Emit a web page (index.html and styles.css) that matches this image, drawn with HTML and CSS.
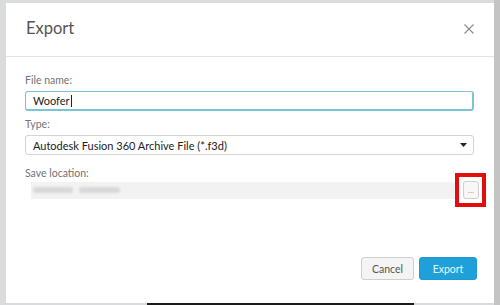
FILE: index.html
```html
<!DOCTYPE html>
<html lang="en">
<head>
    <meta charset="UTF-8">
    <meta name="viewport" content="width=device-width, initial-scale=1.0">
    <title>Export</title>
    <link rel="stylesheet" href="styles.css">
</head>
<body>
    <div class="backdrop">
        <div class="dialog">
            <div class="dialog-header">
                <h1>Export</h1>
                <button class="btn-close" aria-label="Close">
                    <svg width="10" height="10" viewBox="0 0 10 10">
                        <path d="M0.5 0.5 L9.5 9.5 M9.5 0.5 L0.5 9.5" stroke="#8a8a8a" stroke-width="1.1" fill="none"/>
                    </svg>
                </button>
            </div>

            <div class="dialog-body">
                <div class="form-group">
                    <label>File name:</label>
                    <div class="input focused">
                        <span>Woofer</span><span class="caret"></span>
                    </div>
                </div>
                <div class="form-group">
                    <label>Type:</label>
                    <div class="input select">
                        <span>Autodesk Fusion 360 Archive File (*.f3d)</span>
                        <svg width="7" height="4" viewBox="0 0 7 4"><path d="M0 0 H7 L3.5 4 Z" fill="#222"/></svg>
                    </div>
                </div>
                <div class="form-group location-group">
                    <label>Save location:</label>
                    <div class="location-row">
                        <div class="location">
                            <span class="blur blur-a"></span>
                            <span class="blur blur-b"></span>
                        </div>
                        <div class="browse-mark">
                            <button class="btn-browse">...</button>
                        </div>
                    </div>
                </div>
            </div>

            <div class="dialog-footer">
                <button class="btn btn-cancel">Cancel</button>
                <button class="btn btn-export">Export</button>
            </div>
        </div>
        <div class="taskbar">
            <span class="bar-dark"></span>
        </div>
    </div>
</body>
</html>
```

FILE: styles.css
```css
body {
    margin: 0;
    padding: 0;
    width: 500px;
    height: 305px;
    overflow: hidden;
    background: #d6d8da;
    font-family: Lato, "Noto Sans", Arial, sans-serif;
}

.backdrop {
    height: 305px;
    background: linear-gradient(to right, #d9dbdd 0, #d9dbdd 494px, #c4c4c4 494px);
    padding-top: 3px;
    box-sizing: border-box;
}

.dialog {
    margin-left: 6px;
    width: 488px;
    height: 300px;
    background: #fff;
    display: flex;
    flex-direction: column;
    box-sizing: border-box;
}

.taskbar {
    height: 2px;
    display: flex;
    padding-left: 147px;
}

.bar-dark {
    width: 267px;
    background: #1a1a1a;
}

.dialog-header {
    height: 53px;
    border-bottom: 1px solid #e2e2e2;
    display: flex;
    align-items: center;
    justify-content: space-between;
    padding: 0 20px 0 20px;
}

.dialog-header h1 {
    margin: 0 0 3px 0;
    font-size: 16.5px;
    font-weight: 400;
    color: #555;
}

.btn-close {
    background: none;
    border: none;
    padding: 0;
    display: flex;
    margin-bottom: 2px;
    cursor: pointer;
}

.dialog-body {
    padding: 16px 20px 0 19px;
    flex: 1;
}

.form-group label {
    display: block;
    font-size: 10.5px;
    color: #737373;
    line-height: 14px;
    margin-bottom: 4px;
}

.input {
    height: 20px;
    box-sizing: border-box;
    border: 1px solid #d4d4d4;
    border-radius: 3px;
    display: flex;
    align-items: center;
    padding: 0 6px 0 7px;
    font-size: 11px;
    color: #222;
}

.input.focused {
    border-color: #7cc3d3;
    border-width: 1px 2px 2px 1px;
    margin-bottom: 6px;
}

.caret {
    width: 1px;
    height: 12px;
    background: #222;
    margin-left: 1px;
}

.select {
    justify-content: space-between;
    background: #fff;
    margin-bottom: 11px;
}

.location-group label {
    margin-bottom: 1px;
}

.location-row {
    display: flex;
    align-items: center;
}

.location {
    flex: 1;
    height: 17px;
    margin-left: 6px;
    background: #f2f2f2;
    display: flex;
    align-items: center;
    gap: 6px;
    padding-left: 2px;
}

.blur {
    height: 6px;
    border-radius: 3px;
    background: #d8d8d8;
    filter: blur(1.2px);
}

.blur-a {
    width: 40px;
}

.blur-b {
    width: 41px;
}

.browse-mark {
    display: flex;
    border: 4px solid #e40d0d;
    padding: 4px 3px 4px 4px;
    margin: -8px -12px -8px -3px;
}

.btn-browse {
    width: 16px;
    height: 18px;
    border: 1px solid #cfcfcf;
    border-radius: 3px;
    background: #f7f7f7;
    color: #777;
    font-size: 8px;
    padding: 0;
    line-height: 18px;
}

.dialog-footer {
    display: flex;
    justify-content: flex-end;
    gap: 5px;
    padding: 0 17px 23px 0;
}

.btn {
    height: 23px;
    border-radius: 3px;
    font-family: inherit;
    font-size: 10.5px;
    padding: 0;
    cursor: pointer;
}

.btn-cancel {
    width: 53px;
    background: #f4f4f4;
    border: 1px solid #cfcfcf;
    color: #555;
}

.btn-export {
    width: 58px;
    background: #20a0d8;
    border: 1px solid #1e98cf;
    color: #e8f6fc;
}
```
